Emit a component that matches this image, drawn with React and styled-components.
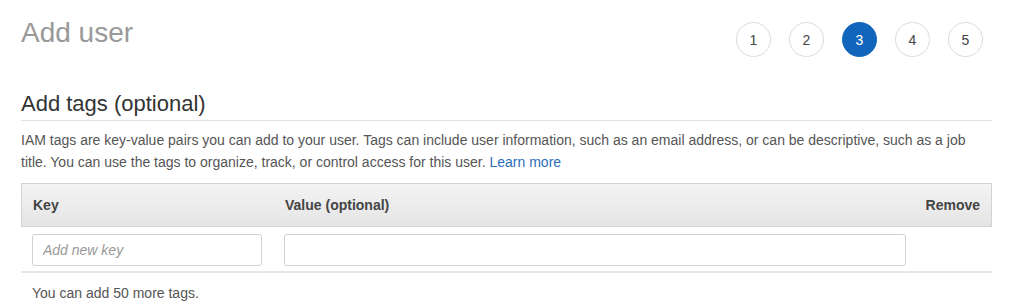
import React from 'react';
import styled, { createGlobalStyle } from 'styled-components';

const GlobalStyle = createGlobalStyle`
  body {
    margin: 0;
    background: #ffffff;
    font-family: 'Liberation Sans', Arial, sans-serif;
  }
`;

const steps = [1, 2, 3, 4, 5];

const App = () => (
  <Page>
    <GlobalStyle />
    <TopBar>
      <Title>Add user</Title>
      <Steps>
        {steps.map(n => (
          <Step key={n} active={n === 3}>{n}</Step>
        ))}
      </Steps>
    </TopBar>

    <SectionHeading>Add tags (optional)</SectionHeading>

    <Description>
      IAM tags are key-value pairs you can add to your user. Tags can include user information, such as an
      email address, or can be descriptive, such as a job title. You can use the tags to organize, track, or
      control access for this user. <LearnMore href="#">Learn more</LearnMore>
    </Description>

    <Table>
      <HeaderRow>
        <HeaderCell>Key</HeaderCell>
        <HeaderCell>Value (optional)</HeaderCell>
        <HeaderCell align="right">Remove</HeaderCell>
      </HeaderRow>
      <BodyRow>
        <Cell>
          <TextInput placeholder="Add new key" />
        </Cell>
        <Cell>
          <TextInput />
        </Cell>
        <Cell />
      </BodyRow>
    </Table>

    <Footnote>You can add 50 more tags.</Footnote>
  </Page>
);

export default App;

const Page = styled.div`
  padding: 17px 20px 0 21px;
  color: #555;
`;

const TopBar = styled.div`
  display: flex;
  justify-content: space-between;
  align-items: flex-start;
  height: 74px;
`;

const Title = styled.h1`
  margin: 0;
  font-size: 28px;
  line-height: 32px;
  font-weight: 400;
  color: #999;
`;

const Steps = styled.div`
  display: flex;
  gap: 18px;
  margin-top: 5px;
  margin-right: 9px;
`;

const Step = styled.div`
  width: 35px;
  height: 35px;
  box-sizing: border-box;
  border-radius: 50%;
  border: 1px solid ${p => (p.active ? '#1166bb' : '#dcdcdc')};
  background: ${p => (p.active ? '#1166bb' : '#fff')};
  color: ${p => (p.active ? '#fff' : '#444')};
  font-size: 14px;
  display: flex;
  align-items: center;
  justify-content: center;
`;

const SectionHeading = styled.h2`
  margin: 0;
  font-size: 22px;
  line-height: 26px;
  font-weight: 400;
  color: #333;
  padding-bottom: 3px;
  border-bottom: 1px solid #e1e1e1;
`;

const Description = styled.p`
  margin: 8px 0 0;
  font-size: 14px;
  line-height: 22px;
  color: #555;
`;

const LearnMore = styled.a`
  color: #2a6ebb;
  text-decoration: none;
`;

const Table = styled.div`
  margin-top: 10px;
  border-bottom: 2px solid #e6e6e6;
`;

const HeaderRow = styled.div`
  display: grid;
  grid-template-columns: 252px 1fr 75px;
  height: 44px;
  box-sizing: border-box;
  border: 1px solid #d3d3d3;
  background: linear-gradient(#f3f3f3, #e5e5e5);
`;

const HeaderCell = styled.div`
  display: flex;
  align-items: center;
  justify-content: ${p => (p.align === 'right' ? 'flex-end' : 'flex-start')};
  padding: 0 11px;
  font-size: 14px;
  font-weight: 700;
  color: #444;
`;

const BodyRow = styled.div`
  display: grid;
  grid-template-columns: 252px 1fr 75px;
  padding: 7px 0 5px;
`;

const Cell = styled.div`
  padding: 0 11px;
`;

const TextInput = styled.input`
  display: block;
  width: 100%;
  height: 32px;
  box-sizing: border-box;
  border: 1px solid #d0d0d0;
  border-radius: 3px;
  padding: 0 10px;
  font-family: 'Liberation Sans', Arial, sans-serif;
  font-size: 14px;
  color: #333;
  outline: none;

  &::placeholder {
    color: #999;
    font-style: italic;
  }
`;

const Footnote = styled.p`
  margin: 10px 0 0 11px;
  font-size: 14px;
  line-height: 20px;
  color: #555;
`;
